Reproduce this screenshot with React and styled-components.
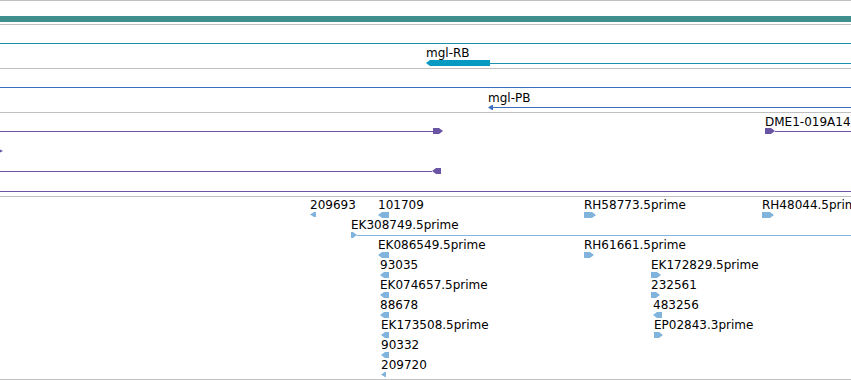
import React from "react";
import styled, { createGlobalStyle } from "styled-components";

const WIDTH = 851;

const GlobalStyle = createGlobalStyle`
  html, body {
    margin: 0;
    padding: 0;
    background: #ffffff;
    overflow: hidden;
  }
  body {
    font-family: "DejaVu Sans", "Liberation Sans", sans-serif;
  }
`;

const C = {
  grid: "#c0c0c0",
  band: "#408f8f",
  rb: "#1b90aa",
  rbBlock: "#069ac2",
  pb: "#3b6ebf",
  dme: "#6a55a5",
  est: "#80b4dc",
};

const line = (w) => ({ kind: "line", w });
const block = (w, dir) => ({ kind: "block", w, dir });

const tracks = [
  {
    height: 23,
    features: [{ x: 0, y: 15, h: 6, color: C.band, segs: [block(WIDTH)] }],
  },
  {
    height: 43,
    features: [
      { x: 0, y: 18, h: 1, color: C.rb, segs: [line(WIDTH)] },
      {
        x: 426,
        y: 21,
        label: "mgl-RB",
        h: 6,
        color: C.rb,
        segs: [{ ...block(64, "left"), color: C.rbBlock }, line(361)],
      },
    ],
  },
  {
    height: 43,
    features: [
      { x: 0, y: 18, h: 1, color: C.pb, segs: [line(WIDTH)] },
      {
        x: 488,
        y: 22,
        label: "mgl-PB",
        h: 5,
        color: C.pb,
        segs: [block(5, "left"), line(358)],
      },
    ],
  },
  {
    height: 83,
    features: [
      { x: 0, y: 15, h: 6, color: C.dme, segs: [line(433), block(10, "right")] },
      {
        x: 765,
        y: 2,
        gap: -1,
        label: "DME1-019A14",
        h: 6,
        color: C.dme,
        segs: [block(10, "right"), line(76)],
      },
      { x: -3, y: 36, h: 4, color: C.dme, segs: [block(6, "right")] },
      { x: 0, y: 55, h: 6, color: C.dme, segs: [line(432), block(9, "left")] },
      { x: 0, y: 78, h: 1, color: C.dme, segs: [line(WIDTH)] },
    ],
  },
];

// EST hits: label x, row, glyph width, strand
const ests = [
  { name: "209693", x: 310, row: 0, w: 6, dir: "left", small: true },
  { name: "101709", x: 378, row: 0, w: 11, dir: "left" },
  { name: "RH58773.5prime", x: 584, row: 0, w: 12, dir: "right" },
  { name: "RH48044.5prime", x: 762, row: 0, w: 12, dir: "right" },
  { name: "EK308749.5prime", x: 351, row: 1, w: 6, dir: "right", tail: 494 },
  { name: "EK086549.5prime", x: 378, row: 2, w: 11, dir: "left" },
  { name: "RH61661.5prime", x: 584, row: 2, w: 10, dir: "right" },
  { name: "93035", x: 380, row: 3, w: 9, dir: "left" },
  { name: "EK172829.5prime", x: 651, row: 3, w: 10, dir: "right" },
  { name: "EK074657.5prime", x: 380, row: 4, w: 9, dir: "left" },
  { name: "232561", x: 651, row: 4, w: 9, dir: "right" },
  { name: "88678", x: 380, row: 5, w: 9, dir: "left" },
  { name: "483256", x: 653, row: 5, w: 9, dir: "left" },
  { name: "EK173508.5prime", x: 381, row: 6, w: 8, dir: "left" },
  { name: "EP02843.3prime", x: 654, row: 6, w: 9, dir: "right" },
  { name: "90332", x: 381, row: 7, w: 8, dir: "left" },
  { name: "209720", x: 381, row: 8, w: 5, dir: "left", small: true },
];

const Glyph = ({ segs, h, color }) => {
  const total = segs.reduce((s, g) => s + g.w, 0);
  let x = 0;
  return (
    <svg width={total} height={h} style={{ display: "block" }}>
      {segs.map((g, i) => {
        const x0 = x;
        x += g.w;
        const fill = g.color || color;
        if (g.kind === "line") {
          const y = Math.floor(h / 2);
          return <rect key={i} x={x0} y={y} width={g.w} height={1} fill={fill} />;
        }
        const head = Math.min(g.dir ? 4 : 0, g.w);
        const x1 = x0 + g.w;
        let pts;
        if (g.dir === "left") {
          pts = `${x0},${h / 2} ${x0 + head},0 ${x1},0 ${x1},${h} ${x0 + head},${h}`;
        } else if (g.dir === "right") {
          pts = `${x0},0 ${x1 - head},0 ${x1},${h / 2} ${x1 - head},${h} ${x0},${h}`;
        } else {
          pts = `${x0},0 ${x1},0 ${x1},${h} ${x0},${h}`;
        }
        return <polygon key={i} points={pts} fill={fill} />;
      })}
    </svg>
  );
};

const Feature = ({ f }) => (
  <FeatureBox $x={f.x} $y={f.y}>
    {f.label && <Label>{f.label}</Label>}
    <GlyphSlot $gap={f.gap || 0}>
      <Glyph segs={f.segs} h={f.h} color={f.color} />
    </GlyphSlot>
  </FeatureBox>
);

const App = () => {
  return (
    <>
      <GlobalStyle />
      <Panel>
        {tracks.map((t, i) => (
          <Track key={i} $height={t.height}>
            {t.features.map((f, j) => (
              <Feature key={j} f={f} />
            ))}
          </Track>
        ))}
        <Track $height={182} $last>
          {ests.map((e) => {
            const h = e.small ? 5 : 6;
            const segs = [{ kind: "block", w: e.w, dir: e.dir }];
            if (e.tail) segs.push({ kind: "line", w: e.tail });
            return (
              <Feature
                key={e.name}
                f={{
                  x: e.x,
                  y: e.row * 20 + 1,
                  label: e.name,
                  gap: 0,
                  h,
                  color: C.est,
                  segs,
                }}
              />
            );
          })}
        </Track>
      </Panel>
    </>
  );
};

const Panel = styled.div`
  width: ${WIDTH}px;
  display: flex;
  flex-direction: column;
  background: #ffffff;
`;

const Track = styled.div`
  position: relative;
  height: ${(p) => p.$height}px;
  border-top: 1px solid ${C.grid};
  border-bottom: ${(p) => (p.$last ? `1px solid ${C.grid}` : "none")};
  overflow: hidden;
`;

const FeatureBox = styled.div`
  position: absolute;
  left: ${(p) => p.$x}px;
  top: ${(p) => p.$y}px;
  display: flex;
  flex-direction: column;
  align-items: flex-start;
`;

const GlyphSlot = styled.div`
  margin-top: ${(p) => p.$gap}px;
`;

const Label = styled.span`
  font-size: 12px;
  line-height: 14px;
  color: #000000;
  white-space: nowrap;
`;

export default App;
